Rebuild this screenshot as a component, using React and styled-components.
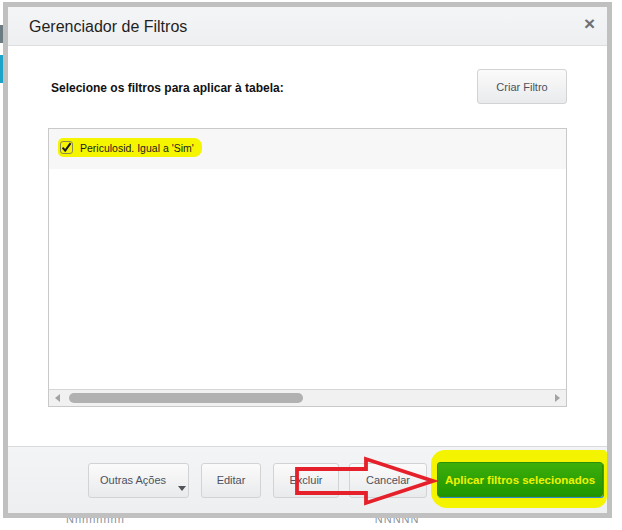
import React from "react";
import styled, { createGlobalStyle } from "styled-components";

const GlobalStyle = createGlobalStyle`
  html, body {
    margin: 0;
    padding: 0;
    background: #fff;
  }
  body {
    font-family: "Liberation Sans", Arial, sans-serif;
  }
`;

const Page = styled.div`
  position: relative;
  width: 622px;
  height: 530px;
  overflow: hidden;
  background: #fff;
`;

/* page behind the modal, only slivers of it are visible */
const Behind = styled.div`
  display: flex;
  flex-direction: column;
  width: 3px;
  padding-top: 25px;
  gap: 12px;
`;

const Stripe = styled.div`
  height: ${(p) => p.h}px;
  background: ${(p) => p.c};
`;

const BelowText = styled.div`
  position: absolute;
  top: 518px;
  left: 0;
  right: 0;
  display: flex;
  gap: 250px;
  padding-left: 66px;
  font-size: 11px;
  color: #8a93a0;
  line-height: 11px;
  height: 7px;
  overflow: hidden;
  span {
    display: block;
    margin-top: -4px;
    letter-spacing: 1px;
  }
`;

const Frame = styled.div`
  position: absolute;
  top: 2px;
  left: 3px;
  border: 5px solid #c0c0c0;
`;

const Dialog = styled.div`
  width: 599px;
  height: 506px;
  display: flex;
  flex-direction: column;
  background: #fff;
`;

const Header = styled.div`
  height: 38px;
  flex-shrink: 0;
  display: flex;
  align-items: center;
  justify-content: space-between;
  padding: 0 12px 0 21px;
  background: linear-gradient(#f4f5f6, #eeeff0);
  border-bottom: 1px solid #dcdedf;
`;

const Title = styled.h1`
  margin: 0;
  font-size: 16px;
  font-weight: normal;
  color: #1f1f1f;
  padding-top: 2px;
`;

const Close = styled.span`
  font-size: 19px;
  font-weight: bold;
  color: #6d7075;
  line-height: 1;
  margin-top: -6px;
`;

const Body = styled.div`
  flex: 1;
  display: flex;
  flex-direction: column;
  padding: 23px 40px 0 40px;
`;

const TopRow = styled.div`
  display: flex;
  align-items: center;
  justify-content: space-between;
`;

const Label = styled.span`
  margin-left: 3px;
  padding-top: 3px;
  font-size: 12px;
  font-weight: bold;
  color: #111;
`;

const Button = styled.button`
  height: 35px;
  width: ${(p) => p.w}px;
  flex-shrink: 0;
  border: 1px solid #d2d3d5;
  border-radius: 3px;
  background: linear-gradient(#fbfbfb, #e9eaeb);
  font-family: "Liberation Sans", Arial, sans-serif;
  font-size: 11px;
  color: #4b5160;
  padding: 0;
  position: relative;
  text-align: ${(p) => (p.left ? "left" : "center")};
  padding-left: ${(p) => (p.left ? "11px" : "0")};
  margin-right: ${(p) => p.mr || 0}px;
`;

const Caret = styled.span`
  position: absolute;
  right: 2px;
  bottom: 6px;
  width: 0;
  height: 0;
  border-left: 4px solid transparent;
  border-right: 4px solid transparent;
  border-top: 5px solid #505459;
`;

const ListBox = styled.div`
  margin-top: 24px;
  height: 277px;
  border: 1px solid #c9c9c9;
  display: flex;
  flex-direction: column;
`;

const List = styled.div`
  flex: 1;
`;

const Row = styled.div`
  height: 40px;
  box-sizing: border-box;
  display: flex;
  align-items: flex-start;
  padding: 9px 0 0 9px;
  background: #f7f7f7;
`;

const Marker = styled.span`
  display: inline-flex;
  align-items: center;
  gap: 7px;
  background: #f5f500;
  border-radius: 5px 8px 8px 5px;
  padding: 3px 8px 3px 2px;
  font-size: 10.5px;
  color: #1b1b1b;
`;

const ScrollBar = styled.div`
  height: 16px;
  border-top: 1px solid #d6d6d6;
  background: #f1f1f1;
  display: flex;
  align-items: center;
  padding: 0 6px;
  gap: 9px;
`;

const Arrow = styled.span`
  width: 0;
  height: 0;
  border-top: 4px solid transparent;
  border-bottom: 4px solid transparent;
  ${(p) =>
    p.dir === "left"
      ? "border-right: 5px solid #a3a3a3;"
      : "border-left: 5px solid #a3a3a3; margin-left: auto;"}
`;

const Thumb = styled.div`
  width: 234px;
  height: 10px;
  border-radius: 5px;
  background: #b1b1b1;
`;

const Footer = styled.div`
  position: relative;
  height: 66px;
  flex-shrink: 0;
  border-top: 1px solid #d9dadb;
  background: linear-gradient(#f3f4f5, #eeeff0);
  display: flex;
  align-items: center;
  justify-content: flex-end;
  gap: 10px;
`;

const Highlight = styled.div`
  margin-left: -6px;
  align-self: center;
  height: 58px;
  display: flex;
  align-items: center;
  padding: 0 4px 0 6px;
  margin-top: -3px;
  background: #f4f400;
  border-radius: 14px 4px 12px 16px;
`;

const GoButton = styled.button`
  height: 35px;
  width: 166px;
  margin-top: 2px;
  border: 1px solid #2c8f05;
  border-radius: 3px;
  background: linear-gradient(#3daf0c, #1f9600);
  font-family: "Liberation Sans", Arial, sans-serif;
  font-size: 11.5px;
  font-weight: bold;
  color: #eef300;
  padding: 0;
  box-shadow: 1px 1px 0 #2c8ad0;
`;

const Pointer = styled.svg`
  position: absolute;
  left: 285px;
  top: 0;
  pointer-events: none;
`;

function CheckBox() {
  return (
    <svg width="13" height="13" viewBox="0 0 13 13">
      <rect x="0.5" y="0.5" width="12" height="12" rx="2.5" fill="none" stroke="#8c8c50" />
      <path d="M2.6 6.6 L5.2 9.6 L10.6 2.2" fill="none" stroke="#1a1a1a" strokeWidth="2" />
    </svg>
  );
}

export default function App() {
  return (
    <Page>
      <GlobalStyle />
      <Behind>
        <Stripe h={18} c="#6c7b82" />
        <Stripe h={28} c="#1ea3c8" />
      </Behind>
      <BelowText>
        <span>Nnnnnnnn</span>
        <span>NNNNN</span>
      </BelowText>
      <Frame>
        <Dialog>
          <Header>
            <Title>Gerenciador de Filtros</Title>
            <Close>×</Close>
          </Header>
          <Body>
            <TopRow>
              <Label>Selecione os filtros para aplicar à tabela:</Label>
              <Button w={90}>Criar Filtro</Button>
            </TopRow>
            <ListBox>
              <List>
                <Row>
                  <Marker>
                    <CheckBox />
                    Periculosid. Igual a 'Sim'
                  </Marker>
                </Row>
              </List>
              <ScrollBar>
                <Arrow dir="left" />
                <Thumb />
                <Arrow dir="right" />
              </ScrollBar>
            </ListBox>
          </Body>
          <Footer>
            <Button w={101} left mr={2}>
              Outras Ações
              <Caret />
            </Button>
            <Button w={60} mr={2}>Editar</Button>
            <Button w={66}>Excluir</Button>
            <Button w={78}>Cancelar</Button>
            <Highlight>
              <GoButton>Aplicar filtros selecionados</GoButton>
            </Highlight>
            <Pointer width="160" height="66" viewBox="0 0 160 66">
              <polygon
                points="4,22 73,22 73,12 140,34 73,56 73,46 4,46"
                fill="none"
                stroke="#e5202a"
                strokeWidth="3.8"
                strokeLinejoin="miter"
              />
            </Pointer>
          </Footer>
        </Dialog>
      </Frame>
    </Page>
  );
}
